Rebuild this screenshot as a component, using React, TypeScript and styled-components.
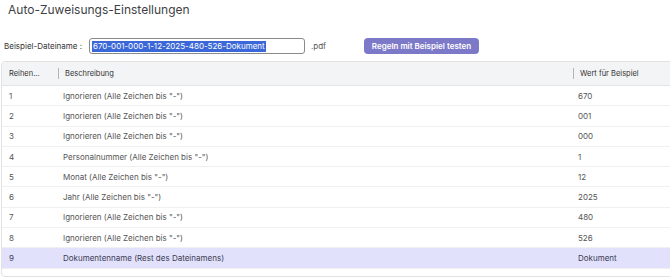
import { createGlobalStyle } from "styled-components";
import styled from "styled-components";

const GlobalStyle = createGlobalStyle`
  html, body {
    margin: 0;
    padding: 0;
    background: #ffffff;
    overflow: hidden;
    font-family: Inter, "Liberation Sans", sans-serif;
  }
`;

const Page = styled.div`
  width: 670px;
  height: 279px;
  overflow: hidden;
  padding-left: 1px;
  box-sizing: border-box;
`;

const Title = styled.h1`
  margin: 0;
  padding: 2px 0 0 7px;
  height: 26px;
  box-sizing: border-box;
  font-size: 12px;
  font-weight: 400;
  color: #3f3f46;
  line-height: 16px;
`;

const ExampleRow = styled.div`
  display: flex;
  align-items: center;
  height: 20px;
  margin-top: 10px;
  padding-left: 3px;
`;

const Label = styled.span`
  font-size: 8px;
  color: #333;
  width: 85px;
`;

const FileInput = styled.div`
  width: 216px;
  height: 16px;
  box-sizing: border-box;
  border: 1px solid #8a8a8a;
  border-radius: 3px;
  display: flex;
  align-items: center;
  padding-left: 2px;
`;

const Selected = styled.span`
  background: #3a68d8;
  color: #ffffff;
  font-size: 8px;
  line-height: 11px;
  padding: 0 1px;
`;

const Ext = styled.span`
  font-size: 8px;
  color: #555;
  margin-left: 6px;
  width: 53px;
`;

const TestButton = styled.button`
  height: 16px;
  width: 115px;
  border: none;
  border-radius: 4px;
  background: #7c79c9;
  color: #ffffff;
  font-family: inherit;
  font-size: 8px;
  font-weight: 600;
  padding: 0;
`;

const Table = styled.div`
  margin-top: 5px;
  width: 690px;
  height: 216px;
  box-sizing: border-box;
  border: 1px solid #e2e2e2;
  border-radius: 4px;
  overflow: hidden;
`;

const Grid = styled.div`
  display: grid;
  grid-template-columns: 56px 515px 1fr;
`;

const HeadCell = styled.div<{ $sep?: boolean }>`
  position: relative;
  height: 23px;
  background: #f3f4f6;
  border-bottom: 1px solid #e5e5e5;
  display: flex;
  align-items: center;
  padding-left: 7px;
  font-size: 7.5px;
  color: #333;
  &::before {
    content: "";
    display: ${(p) => (p.$sep ? "block" : "none")};
    position: absolute;
    left: 0;
    top: 6px;
    height: 11px;
    width: 1px;
    background: #b5b5b5;
  }
`;

const Cell = styled.div<{ $active?: boolean; $first?: boolean }>`
  height: 19.3px;
  border-bottom: 1px solid #f0f0f0;
  background: ${(p) => (p.$active ? "#e2e1fb" : "#ffffff")};
  display: flex;
  align-items: center;
  padding-left: ${(p) => (p.$first ? "7px" : "5px")};
  font-size: 8px;
  color: ${(p) => (p.$active ? "#3c3c55" : "#555")};
`;

const rows = [
  ["1", 'Ignorieren (Alle Zeichen bis "-")', "670"],
  ["2", 'Ignorieren (Alle Zeichen bis "-")', "001"],
  ["3", 'Ignorieren (Alle Zeichen bis "-")', "000"],
  ["4", 'Personalnummer (Alle Zeichen bis "-")', "1"],
  ["5", 'Monat (Alle Zeichen bis "-")', "12"],
  ["6", 'Jahr (Alle Zeichen bis "-")', "2025"],
  ["7", 'Ignorieren (Alle Zeichen bis "-")', "480"],
  ["8", 'Ignorieren (Alle Zeichen bis "-")', "526"],
  ["9", "Dokumentenname (Rest des Dateinamens)", "Dokument"],
];

export default function App() {
  return (
    <Page>
      <GlobalStyle />
      <Title>Auto-Zuweisungs-Einstellungen</Title>
      <ExampleRow>
        <Label>Beispiel-Dateiname :</Label>
        <FileInput>
          <Selected>670-001-000-1-12-2025-480-526-Dokument</Selected>
        </FileInput>
        <Ext>.pdf</Ext>
        <TestButton>Regeln mit Beispiel testen</TestButton>
      </ExampleRow>
      <Table>
        <Grid>
          <HeadCell>Reihen...</HeadCell>
          <HeadCell $sep>Beschreibung</HeadCell>
          <HeadCell $sep>Wert für Beispiel</HeadCell>
          {rows.map(([n, desc, val]) => {
            const active = n === "9";
            return [
              <Cell key={n + "a"} $active={active} $first>
                {n}
              </Cell>,
              <Cell key={n + "b"} $active={active}>
                {desc}
              </Cell>,
              <Cell key={n + "c"} $active={active}>
                {val}
              </Cell>,
            ];
          })}
        </Grid>
      </Table>
    </Page>
  );
}
